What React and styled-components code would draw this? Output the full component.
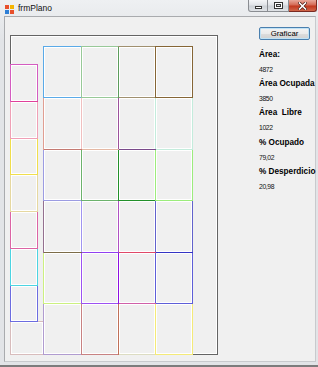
import React from 'react';
import styled, { createGlobalStyle } from 'styled-components';

const GlobalStyle = createGlobalStyle`
  html, body {
    margin: 0;
    padding: 0;
    background: #e4e6e9;
  }
  body {
    width: 318px;
    height: 367px;
    overflow: hidden;
  }
`;

// panel-local coordinates (page - panel origin at 10,35)
const COLS = [33, 71, 108, 145, 182];
const ROWS = [11, 62, 114, 165, 217, 268, 319];
const STRIP_Y = [29, 66, 103, 139, 176, 213, 250, 286];

const GRID = [
  ['#5aaae8', '#98c998', '#a0906f', '#866636'],
  ['#e09e92', '#f0c0c0', '#9c509c', '#c4ecdc'],
  ['#9c9ce2', '#6cb26c', '#22902a', '#9cec7c'],
  ['#94708f', '#a094f0', '#b050c4', '#6262cc'],
  ['#ccf080', '#9c52f2', '#8e10e2', '#5e5ed8'],
  ['#b09cd0', '#c88282', '#dcdcc2', '#f4ea78'],
];

const STRIP = ['#d45cc0', '#f0a0b6', '#f0de4c', '#e6d8a0', '#dc64a4', '#4cd4e2', '#6c6ce0'];

// shared edges where the two strokes mixed
const EDGES = [
  [108, 11, 108, 62, '#5c9c5c'],
  [33, 114, 71, 114, '#c47a72'],
  [71, 114, 108, 114, '#e4b8a4'],
  [108, 114, 145, 114, '#7a4a8a'],
  [33, 217, 71, 217, '#7c6c48'],
  [71, 217, 108, 217, '#9040f0'],
  [108, 217, 145, 217, '#e04868'],
  [145, 217, 182, 217, '#3434c4'],
  [108, 268, 145, 268, '#d060a8'],
  [108, 268, 108, 319, '#c07058'],
  [0, 66, 27, 66, '#e0409a'],
];

const buildPieces = () => {
  const list = [{ x: 0, y: 286, w: 33, h: 33, color: '#d8bcbc' }];
  for (let i = STRIP.length - 1; i >= 0; i--) {
    list.push({ x: 0, y: STRIP_Y[i], w: 27, h: STRIP_Y[i + 1] - STRIP_Y[i], color: STRIP[i] });
  }
  for (let r = GRID.length - 1; r >= 0; r--) {
    GRID[r].forEach((color, c) => {
      list.push({
        x: COLS[c],
        y: ROWS[r],
        w: COLS[c + 1] - COLS[c],
        h: ROWS[r + 1] - ROWS[r],
        color,
      });
    });
  }
  return list;
};

const pieces = buildPieces();

const Window = styled.div`
  width: 318px;
  height: 367px;
  display: flex;
  flex-direction: column;
  background: linear-gradient(#eef0f2, #e2e4e7 40px, #e2e4e7);
  box-sizing: border-box;
  border-bottom: 2px solid #7c7c7c;
`;

const TitleBar = styled.div`
  height: 16px;
  display: flex;
  align-items: flex-start;
  padding-left: 5px;
  flex-shrink: 0;
`;

const AppIcon = styled.svg`
  margin-top: 5px;
  display: block;
`;

const Title = styled.span`
  margin-left: 4px;
  font-family: 'Liberation Sans', Arial, sans-serif;
  font-size: 8.5px;
  line-height: 16px;
  color: #111;
`;

const Caption = styled.div`
  margin-left: auto;
  margin-right: 1px;
  display: flex;
  height: 12px;
`;

const CapButton = styled.div`
  width: ${p => p.w}px;
  height: 12px;
  box-sizing: border-box;
  display: flex;
  align-items: center;
  justify-content: center;
  border: 1px solid ${p => (p.close ? '#7a2a22' : '#8a8d92')};
  border-left-width: ${p => (p.first ? 1 : 0)}px;
  border-top: none;
  border-radius: ${p => (p.first ? '0 0 0 3px' : p.close ? '0 0 3px 0' : '0')};
  background: ${p =>
    p.close
      ? 'linear-gradient(#e8a89a, #d46a55 45%, #c2381f 55%, #d0664a)'
      : 'linear-gradient(#f4f5f7, #e0e3e7 45%, #cdd1d6 55%, #dfe2e6)'};
`;

const Body = styled.div`
  flex: 1;
  display: flex;
  padding: 0 4px 3px 4px;
`;

const Client = styled.div`
  flex: 1;
  display: flex;
  align-items: flex-start;
  gap: 41px;
  padding-left: 5px;
  background: #f0f0f0;
  border: 1px solid #a9abae;
  border-right-color: #c8cacd;
  border-bottom-color: #c8cacd;
`;

const Panel = styled.div`
  margin-top: 18px;
  width: 206px;
  height: 318px;
  border: 1px solid #646464;
  box-shadow: inset 0 0 0 1px #ffffff;
  flex-shrink: 0;
`;

const Plano = styled.svg`
  display: block;
  margin: -1px;
  overflow: visible;
`;

const Side = styled.div`
  margin-top: 10px;
  display: flex;
  flex-direction: column;
  font-family: 'Liberation Sans', Arial, sans-serif;
  color: #000;
`;

const Button = styled.div`
  width: 51px;
  height: 13px;
  box-sizing: border-box;
  border: 1px solid #4a7fae;
  border-radius: 2px;
  box-shadow: inset 0 0 0 1px #bfe2f6;
  background: linear-gradient(#f3f3f3, #ebebeb 50%, #dddddd 51%, #d2d2d2);
  font-size: 7.8px;
  line-height: 11px;
  text-align: center;
  margin-bottom: 8px;
`;

const Group = styled.div`
  margin-top: ${p => p.shift || 0}px;
`;

const Label = styled.div`
  font-weight: bold;
  font-size: 8.2px;
  line-height: 14.5px;
  white-space: pre;
`;

const Value = styled.div`
  font-size: 6.8px;
  line-height: 14.5px;
  letter-spacing: -0.4px;
  color: #111;
`;

const stats = [
  { label: 'Área:', value: '4872' },
  { label: 'Área Ocupada', value: '3850' },
  { label: 'Área  Libre', value: '1022' },
  { label: '% Ocupado', value: '79,02', shift: 1.4 },
  { label: '% Desperdicio', value: '20,98' },
];

const App = () => (
  <>
    <GlobalStyle />
    <Window>
      <TitleBar>
        <AppIcon width="9" height="9" viewBox="0 0 9 9">
          <rect x="0" y="0" width="4" height="4" fill="#e8502c" />
          <rect x="5" y="0" width="4" height="4" fill="#f4b400" />
          <rect x="0" y="5" width="4" height="4" fill="#2d7fd6" />
          <rect x="5" y="5" width="4" height="4" fill="#e8502c" />
        </AppIcon>
        <Title>frmPlano</Title>
        <Caption>
          <CapButton w={20} first>
            <svg width="7" height="6" viewBox="0 0 7 6">
              <rect x="0.5" y="3.5" width="6" height="2" fill="#fff" stroke="#333" strokeWidth="1" />
            </svg>
          </CapButton>
          <CapButton w={21}>
            <svg width="9" height="7" viewBox="0 0 9 7">
              <rect x="0.5" y="0.5" width="8" height="6" fill="none" stroke="#333" strokeWidth="1" />
              <rect x="1.5" y="1.5" width="6" height="4" fill="none" stroke="#fff" strokeWidth="1" />
              <rect x="2.5" y="2.5" width="4" height="2" fill="#dfe2e6" stroke="#333" strokeWidth="1" />
            </svg>
          </CapButton>
          <CapButton w={28} close>
            <svg width="9" height="8" viewBox="0 0 9 8">
              <path d="M1.5 1 L7.5 7 M7.5 1 L1.5 7" stroke="#4a1a12" strokeWidth="3" strokeLinecap="square" />
              <path d="M1.5 1 L7.5 7 M7.5 1 L1.5 7" stroke="#ffffff" strokeWidth="1.6" strokeLinecap="square" />
            </svg>
          </CapButton>
        </Caption>
      </TitleBar>
      <Body>
        <Client>
          <Panel>
            <Plano width="208" height="320" viewBox="0 0 208 320" shapeRendering="crispEdges">
              {pieces.map((p, i) => (
                <rect
                  key={`h${i}`}
                  x={p.x + 1.5}
                  y={p.y + 1.5}
                  width={Math.max(p.w - 2, 0)}
                  height={Math.max(p.h - 2, 0)}
                  fill="none"
                  stroke="#ffffff"
                  strokeWidth="1"
                />
              ))}
              {pieces.map((p, i) => (
                <rect
                  key={`r${i}`}
                  x={p.x + 0.5}
                  y={p.y + 0.5}
                  width={p.w}
                  height={p.h}
                  fill="none"
                  stroke={p.color}
                  strokeWidth="1"
                />
              ))}
              {EDGES.map(([x1, y1, x2, y2, color], i) => (
                <line
                  key={`e${i}`}
                  x1={x1 + 0.5}
                  y1={y1 + 0.5}
                  x2={x2 + 0.5}
                  y2={y2 + 0.5}
                  stroke={color}
                  strokeWidth="1"
                />
              ))}
            </Plano>
          </Panel>
          <Side>
            <Button>Graficar</Button>
            {stats.map(s => (
              <Group key={s.label} shift={s.shift}>
                <Label>{s.label}</Label>
                <Value>{s.value}</Value>
              </Group>
            ))}
          </Side>
        </Client>
      </Body>
    </Window>
  </>
);

export default App;
